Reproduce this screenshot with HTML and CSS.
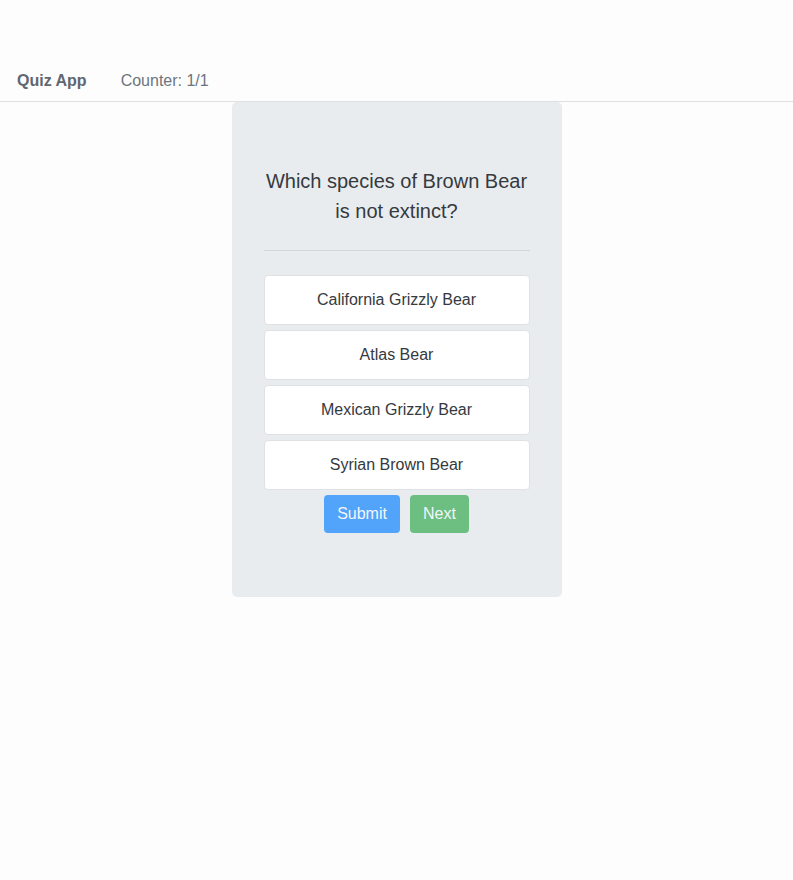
FILE: index.html
```html
<!DOCTYPE html>
<html>
	<head>
		<meta charset="utf-8">
		<title>Quiz App</title>
		<link rel="stylesheet" href="styles.css">
	</head>
	<body>
		<div class="navbar">
			<span class="brand">Quiz App</span>
			<span class="counter">Counter: 1/1</span>
		</div>
		<div class="quiz">
			<h2 class="question">Which species of Brown Bear is not extinct?</h2>
			<hr class="divider">
			<div class="answers">
				<div class="answer">California Grizzly Bear</div>
				<div class="answer">Atlas Bear</div>
				<div class="answer">Mexican Grizzly Bear</div>
				<div class="answer">Syrian Brown Bear</div>
			</div>
			<div class="buttons">
				<div class="btn btn-submit">Submit</div>
				<div class="btn btn-next">Next</div>
			</div>
		</div>
	</body>
</html>
```

FILE: styles.css
```css
body{
	margin:0;
	background-color:#fdfdfd;
	font-family:"Liberation Sans", Arial, sans-serif;
	font-size:16px;
	color:#343a40;
}

.navbar{
	margin-top:60px;
	height:41px;
	padding:0 17px;
	display:flex;
	align-items:center;
	border-bottom:1px solid #e0e0e0;
	color:#6c757d;
}

.brand{
	font-weight:bold;
	color:#5f6770;
	margin-right:34px;
}

.quiz{
	width:266px;
	margin:0 auto;
	padding:64px 32px 64px 32px;
	background-color:#e9ecef;
	border-radius:5px;
	text-align:center;
}

.question{
	margin:0;
	font-size:20px;
	font-weight:normal;
	line-height:30px;
	color:#343a40;
}

.divider{
	margin:24px 0;
	border:0;
	border-top:1px solid #d3d6d9;
}

.answers{
	display:flex;
	flex-direction:column;
	gap:5px;
}

.answer{
	height:48px;
	line-height:48px;
	background-color:#fff;
	border:1px solid #dfe1e4;
	border-radius:4px;
	cursor:pointer;
}

.buttons{
	margin-top:5px;
	display:flex;
	justify-content:center;
	gap:10px;
}

.btn{
	height:38px;
	line-height:38px;
	padding:0 13px;
	border-radius:4px;
	color:#f2f6fb;
	cursor:pointer;
}

.btn-submit{
	background-color:#52a3fa;
}

.btn-next{
	background-color:#6cbf81;
}
```
